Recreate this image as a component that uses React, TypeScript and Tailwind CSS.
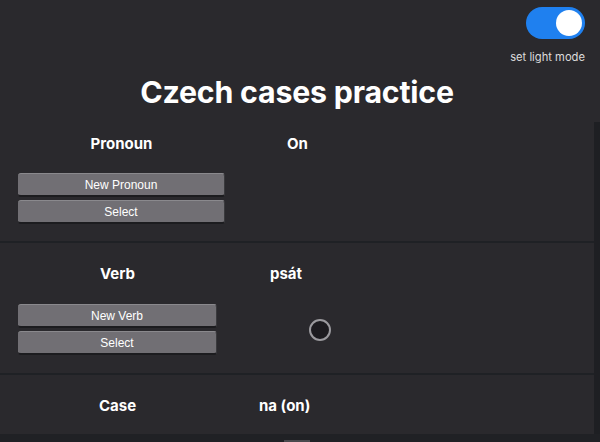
import React from "react";

const font = { fontFamily: "Inter, 'Noto Sans', sans-serif" };

function Btn({ label, w }: { label: string; w: string }) {
  return (
    <div
      className={`${w} h-[24px] flex items-center justify-center bg-[#716f74] rounded-[3px] border-t border-t-[#8a898d] border-b-2 border-b-[#1c1c1f] border-r border-r-[#3a3a3d] text-[12px] text-white`}
      style={{ fontFamily: "'Liberation Sans', Arial, sans-serif" }}
    >
      {label}
    </div>
  );
}

export default function App() {
  return (
    <div className="w-[600px] h-[442px] bg-[#2a292d] flex flex-col overflow-hidden text-white" style={font}>
      <div className="h-[122px] flex flex-col shrink-0">
        <div className="flex justify-end pr-[15px] pt-[7px]">
          <div className="flex flex-col items-end">
            <div className="w-[59px] h-[32px] rounded-full bg-[#1f80ef] flex items-center justify-end pr-[3px]">
              <div className="w-[26px] h-[26px] rounded-full bg-white" />
            </div>
            <div className="mt-[11px] text-[11.2px] leading-[14px] text-[#dcdcdc]">set light mode</div>
          </div>
        </div>
        <div className="mt-[10px] pr-[6px] text-center text-[30.3px] leading-[36px] font-bold tracking-[-0.2px]">
          Czech cases practice
        </div>
      </div>
      <div className="flex-1 flex min-h-0">
        <div className="w-[594px] flex flex-col">
          <div className="h-[119px] pt-[11px]">
            <div className="flex h-[22px] items-center text-[15px] font-bold">
              <div className="w-[207px] ml-[18px] text-center">Pronoun</div>
              <div className="ml-[62px]">On</div>
            </div>
            <div className="mt-[18px] ml-[18px] flex flex-col gap-[3px]">
              <Btn label="New Pronoun" w="w-[207px]" />
              <Btn label="Select" w="w-[207px]" />
            </div>
          </div>
          <div className="h-[2px] bg-[#1f2125]" />
          <div className="h-[130px] pt-[20px]">
            <div className="flex h-[22px] items-center text-[15px] font-bold">
              <div className="w-[199px] ml-[18px] text-center">Verb</div>
              <div className="ml-[53px]">psát</div>
            </div>
            <div className="mt-[19px] ml-[18px] flex items-center">
              <div className="flex flex-col gap-[3px]">
                <Btn label="New Verb" w="w-[199px]" />
                <Btn label="Select" w="w-[199px]" />
              </div>
              <div className="ml-[92px] mt-[1px] w-[22px] h-[22px] rounded-full border-2 border-[#9b9a9e] bg-[#1c1b1f]" />
            </div>
          </div>
          <div className="h-[2px] bg-[#1f2125]" />
          <div className="flex-1 pt-[20px]">
            <div className="flex h-[22px] items-center text-[15px] font-bold">
              <div className="w-[199px] ml-[18px] text-center">Case</div>
              <div className="ml-[42px]">na (on)</div>
            </div>
          </div>
        </div>
        <div className="flex-1 bg-[#1e1f23]" />
      </div>
      <div className="h-[8px] shrink-0 bg-[#202125] flex items-end justify-center">
        <div className="w-[26px] h-[2px] bg-[#4a4a4e] mr-[6px]" />
      </div>
    </div>
  );
}
